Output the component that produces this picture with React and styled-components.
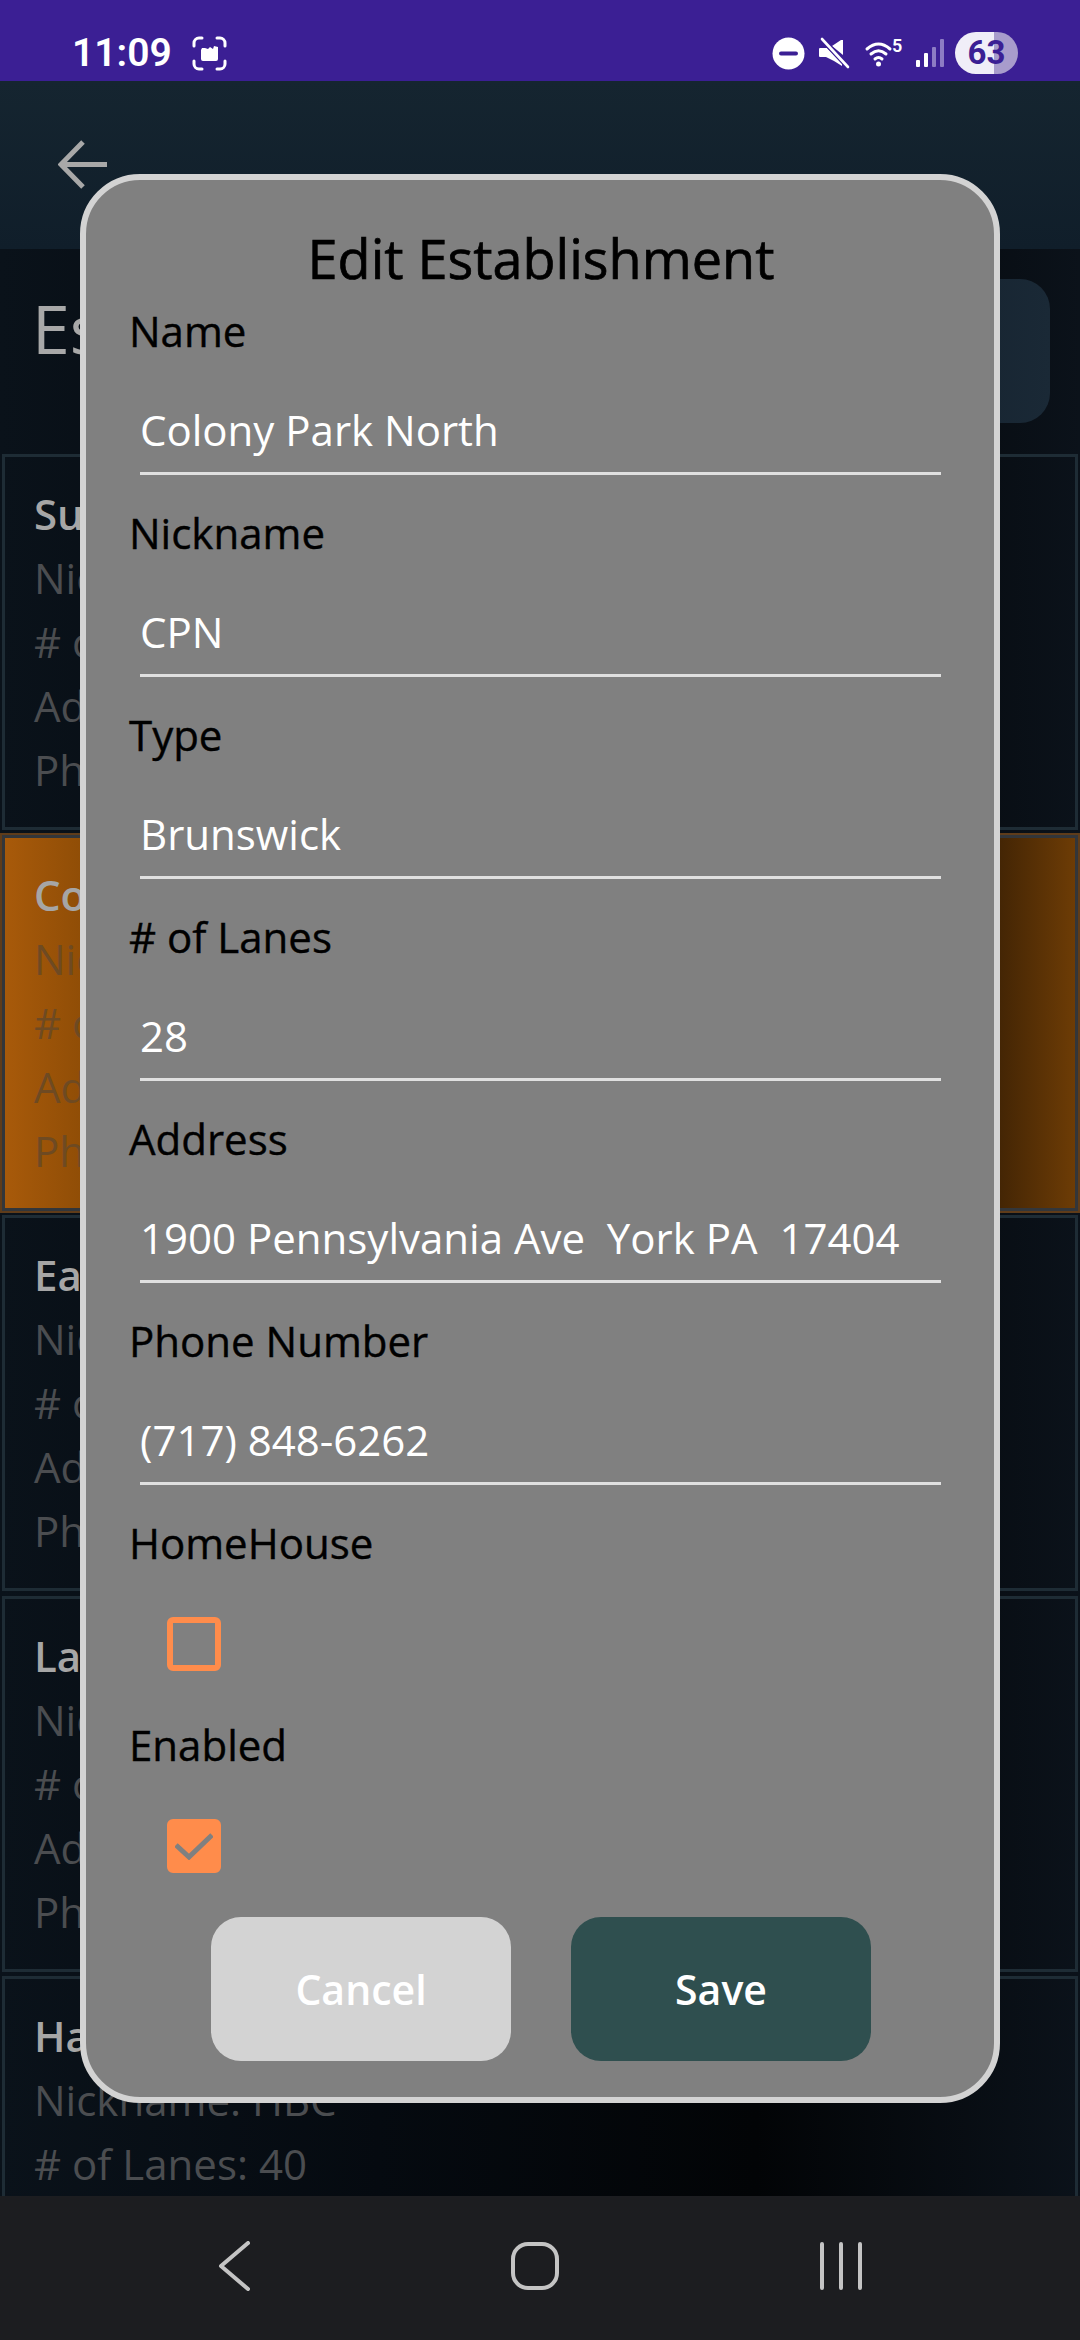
import React from "react";
import styled, { createGlobalStyle } from "styled-components";

const GlobalStyle = createGlobalStyle`
  html, body {
    margin: 0;
    padding: 0;
    background: #000;
  }
  * {
    box-sizing: border-box;
  }
`;

const Page = styled.div`
  position: relative;
  width: 1080px;
  height: 2340px;
  overflow: hidden;
  display: flex;
  flex-direction: column;
  font-family: "Open Sans", "Noto Sans", sans-serif;
`;

const StatusBar = styled.div`
  height: 81px;
  flex: none;
  background: #3b1f94;
  display: flex;
  align-items: flex-start;
  justify-content: space-between;
  padding: 32px 62px 0 72px;
`;

const StatusLeft = styled.div`
  display: flex;
  align-items: center;
  gap: 20px;
  height: 42px;
`;

const Clock = styled.span`
  font-family: Roboto, sans-serif;
  font-weight: 600;
  font-size: 39px;
  line-height: 42px;
  color: #fff;
`;

const StatusRight = styled.div`
  display: flex;
  align-items: center;
  height: 42px;
`;

const StatusIcon = styled.svg`
  display: block;
  flex: none;
  margin-left: ${(p) => p.$gap || 0}px;
  overflow: visible;
`;

const Battery = styled.div`
  width: 63px;
  height: 42px;
  margin-left: 11px;
  border-radius: 21px;
  background: linear-gradient(to right, #f0eef8 62%, #a89ccc 62%);
  color: #3b1f94;
  font-family: Roboto, sans-serif;
  font-weight: 700;
  font-size: 33px;
  line-height: 42px;
  text-align: center;
`;

const Header = styled.div`
  height: 168px;
  flex: none;
  background: linear-gradient(to bottom, #152530, #101e2a);
  padding: 59px 0 0 58px;
`;

const Content = styled.div`
  flex: 1;
  min-height: 0;
  overflow: hidden;
  background: linear-gradient(to right, #0a121a 0, #050a10 35%, #020406 70%, #0b121a 100%);
`;

const TitleRow = styled.div`
  height: 205px;
  display: flex;
  justify-content: space-between;
  align-items: flex-start;
  padding: 30px 30px 0 32px;
`;

const PageTitle = styled.div`
  margin-top: 7px;
  font-size: 68px;
  line-height: 84px;
  color: #a8a8a8;
`;

const AddButton = styled.div`
  width: 300px;
  height: 144px;
  border-radius: 30px;
  background: linear-gradient(to right, #0f1a26, #1a2936);
`;

const CardList = styled.div`
  display: flex;
  flex-direction: column;
  gap: 4.5px;
  padding: 0 2px;
`;

const Card = styled.div`
  height: 376px;
  flex: none;
  padding: 25px 29px;
  border: 3px solid ${(p) => (p.$selected ? "#33363a" : "#1e2c35")};
  box-shadow: ${(p) => (p.$selected ? "0 0 0 2px #5f3c1a" : "none")};
  background: ${(p) =>
    p.$selected
      ? "linear-gradient(to right, #a85a0a 0, #8d4c06 8%, #3e2204 92%, #6d3c06 100%)"
      : "transparent"};
`;

const CardTitle = styled.div`
  font-weight: 600;
  font-size: 42px;
  line-height: 64px;
  white-space: nowrap;
  color: #a6a6a6;
`;

const CardLine = styled.div`
  font-size: 42px;
  line-height: 64px;
  white-space: nowrap;
  color: ${(p) => (p.$selected ? "#6e4a22" : "#4b4d50")};
`;

const NavBar = styled.div`
  height: 144px;
  flex: none;
  background: #1c1d20;
  display: flex;
  align-items: center;
  justify-content: space-between;
  padding: 0 218px 4px 218px;
`;

const Modal = styled.div`
  position: absolute;
  left: 80px;
  top: 174px;
  width: 920px;
  height: 1929px;
  padding: 38px 0 0 43px;
  border: 6px solid #d3d3d3;
  border-radius: 60px;
  background: #808080;
  display: flex;
  flex-direction: column;
`;

const ModalTitle = styled.div`
  margin: 0 0 2px -41px;
  font-size: 54px;
  line-height: 81px;
  text-align: center;
  color: #000;
  -webkit-text-stroke: 0.7px #000;
`;

const FieldLabel = styled.div`
  height: 60px;
  font-size: 42px;
  line-height: 60px;
  color: #000;
  -webkit-text-stroke: 0.4px #000;
`;

const FieldValue = styled.div`
  width: 801px;
  height: 114px;
  margin: 0 0 28px 11px;
  padding-top: 39px;
  border-bottom: 3px solid #e0e0e0;
  font-size: 42px;
  line-height: 60px;
  white-space: pre;
  color: #fff;
`;

const CheckBox = styled.div`
  width: 54px;
  height: 54px;
  margin: 44px 0 44px 38px;
  border: 6px solid #ff8c4b;
  border-radius: 6px;
  background: ${(p) => (p.$checked ? "#ff8c4b" : "transparent")};
  display: flex;
  align-items: center;
  justify-content: center;
`;

const ButtonRow = styled.div`
  margin-left: -41px;
  display: flex;
  justify-content: center;
  gap: 60px;
`;

const ActionButton = styled.div`
  width: 300px;
  height: 144px;
  border-radius: 30px;
  background: ${(p) => (p.$primary ? "#2f4f4f" : "#d3d3d3")};
  color: #fff;
  font-weight: 600;
  font-size: 41px;
  line-height: 144px;
  text-align: center;
`;

const cards = [
  { title: "Suburban Bowlerama", nick: "", lanes: "", address: "", phone: "" },
  {
    title: "Colony Park North",
    nick: "CPN",
    lanes: "28",
    address: "1900 Pennsylvania Ave",
    phone: "(717) 848-6262",
    selected: true,
  },
  { title: "Earl Bowl Lanes", nick: "", lanes: "", address: "", phone: "" },
  { title: "Latimore Valley", nick: "", lanes: "", address: "", phone: "" },
  { title: "Hanover Bowling", nick: "HBC", lanes: "40", address: "", phone: "" },
];

const fields = [
  ["Name", "Colony Park North"],
  ["Nickname", "CPN"],
  ["Type", "Brunswick"],
  ["# of Lanes", "28"],
  ["Address", "1900 Pennsylvania Ave  York PA  17404"],
  ["Phone Number", "(717) 848-6262"],
];

const ScreenshotIcon = () => (
  <svg width="35" height="35" viewBox="0 0 35 35" fill="none">
    <path
      d="M2 10V7a5 5 0 0 1 5-5h3M25 2h3a5 5 0 0 1 5 5v3M33 25v3a5 5 0 0 1-5 5h-3M10 33H7a5 5 0 0 1-5-5v-3"
      stroke="#fff"
      strokeWidth="3"
      strokeLinecap="round"
    />
    <path
      d="M9 23v-9l1-2h3l3 1 2-2 3 2 1-3 4 1v12q0 2-2 2H11q-2 0-2-2z"
      fill="#fff"
    />
  </svg>
);

const DndIcon = () => (
  <StatusIcon width="33" height="33" viewBox="0 0 33 33">
    <circle cx="16.5" cy="16.5" r="16" fill="#fff" />
    <rect x="7" y="14.5" width="19" height="4" rx="2" fill="#3b1f94" />
  </StatusIcon>
);

const MuteIcon = () => (
  <StatusIcon $gap={14} width="30" height="30" viewBox="0 0 30 30">
    <path d="M1 10h6l1 0 15 15v3l-8-5-8-4H1q-1 0-1-1v-7q0-1 1-1z" fill="#fff" />
    <path d="M13 8l9-6h2v15z" fill="#fff" />
    <path d="M3 1l26 28" stroke="#3b1f94" strokeWidth="5" />
    <path d="M3 1l26 28" stroke="#fff" strokeWidth="2.6" strokeLinecap="round" />
  </StatusIcon>
);

const WifiIcon = () => (
  <StatusIcon $gap={16} width="36" height="30" viewBox="0 0 36 30" fill="none">
    <path
      d="M2 11q11.5-10 23 0M6 16q7.5-6.500 15 0M10 21q3.500-3 7 0"
      stroke="#fff"
      strokeWidth="3"
      strokeLinecap="round"
    />
    <circle cx="13.500" cy="26" r="2.500" fill="#fff" />
    <text
      x="27"
      y="14"
      fill="#fff"
      fontSize="18"
      fontWeight="600"
      fontFamily="Roboto, sans-serif"
    >
      5
    </text>
  </StatusIcon>
);

const SignalIcon = () => (
  <StatusIcon $gap={15} width="28" height="30" viewBox="0 0 28 30">
    <rect x="0" y="22" width="4" height="7" rx="1" fill="#fff" />
    <rect x="8" y="15" width="4" height="14" rx="1" fill="#fff" />
    <rect x="16" y="9" width="4" height="20" rx="1" fill="#8d7cc4" />
    <rect x="24" y="1" width="4" height="28" rx="1" fill="#8d7cc4" />
  </StatusIcon>
);

const BackArrow = () => (
  <svg width="50" height="50" viewBox="0 0 50 50" fill="none" style={{ display: "block" }}>
    <path d="M49 24.500H3M25 2L3 24.500 25 47" stroke="#a8a8a8" strokeWidth="5" />
  </svg>
);

const NavBack = () => (
  <svg width="32" height="50" viewBox="0 0 32 50" fill="none">
    <path
      d="M30 2L3 25l27 23"
      stroke="#c4c4c4"
      strokeWidth="4"
      strokeLinecap="round"
      strokeLinejoin="round"
    />
  </svg>
);

const NavHome = () => (
  <svg width="50" height="50" viewBox="0 0 50 50" fill="none">
    <rect x="3" y="3" width="44" height="44" rx="15" stroke="#c4c4c4" strokeWidth="4" />
  </svg>
);

const NavRecents = () => (
  <svg width="42" height="50" viewBox="0 0 42 50" fill="none">
    <path
      d="M2 3v44M21 3v44M40 3v44"
      stroke="#c4c4c4"
      strokeWidth="4"
      strokeLinecap="round"
    />
  </svg>
);

const App = () => {
  return (
    <Page>
      <GlobalStyle />
      <StatusBar>
        <StatusLeft>
          <Clock>11:09</Clock>
          <ScreenshotIcon />
        </StatusLeft>
        <StatusRight>
          <DndIcon />
          <MuteIcon />
          <WifiIcon />
          <SignalIcon />
          <Battery>63</Battery>
        </StatusRight>
      </StatusBar>

      <Header>
        <BackArrow />
      </Header>

      <Content>
        <TitleRow>
          <PageTitle>Establishments</PageTitle>
          <AddButton />
        </TitleRow>
        <CardList>
          {cards.map((c) => (
            <Card key={c.title} $selected={c.selected}>
              <CardTitle>{c.title}</CardTitle>
              <CardLine $selected={c.selected}>Nickname: {c.nick}</CardLine>
              <CardLine $selected={c.selected}># of Lanes: {c.lanes}</CardLine>
              <CardLine $selected={c.selected}>Address: {c.address}</CardLine>
              <CardLine $selected={c.selected}>Phone: {c.phone}</CardLine>
            </Card>
          ))}
        </CardList>
      </Content>

      <NavBar>
        <NavBack />
        <NavHome />
        <NavRecents />
      </NavBar>

      <Modal>
        <ModalTitle>Edit Establishment</ModalTitle>
        {fields.map(([label, value]) => (
          <div key={label}>
            <FieldLabel>{label}</FieldLabel>
            <FieldValue>{value}</FieldValue>
          </div>
        ))}
        <FieldLabel>HomeHouse</FieldLabel>
        <CheckBox />
        <FieldLabel>Enabled</FieldLabel>
        <CheckBox $checked>
          <svg width="38" height="28" viewBox="0 0 38 28" fill="none">
            <path d="M1 13l13 12L37 3" stroke="#808080" strokeWidth="5" />
          </svg>
        </CheckBox>
        <ButtonRow>
          <ActionButton>Cancel</ActionButton>
          <ActionButton $primary>Save</ActionButton>
        </ButtonRow>
      </Modal>
    </Page>
  );
};

export default App;
